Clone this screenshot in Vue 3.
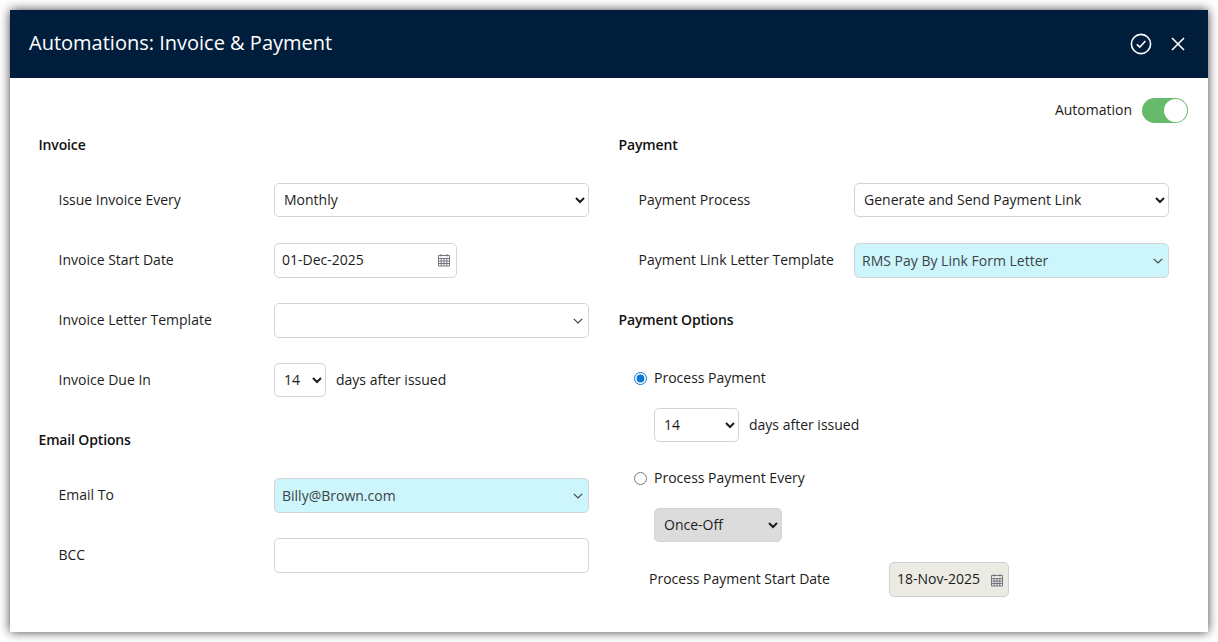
<script setup>
import { ref } from "vue"

const automation = ref(true)
const processMode = ref("days")
</script>

<template>
  <div class="page">
    <div class="modal">
      <header class="modal-header">
        <h1>Automations: Invoice &amp; Payment</h1>
        <div class="header-actions">
          <svg class="icon-check" viewBox="0 0 22 22" width="22" height="22">
            <circle cx="11" cy="11" r="9.6" />
            <path d="M6.8 11.4 9.8 14.2 15.4 8" />
          </svg>
          <svg class="icon-close" viewBox="0 0 16 16" width="16" height="16">
            <path d="M2 2 14 14M14 2 2 14" />
          </svg>
        </div>
      </header>

      <div class="modal-body">
        <div class="toggle-row">
          <span>Automation</span>
          <button class="toggle" :class="{ on: automation }" @click="automation = !automation">
            <span class="knob"></span>
          </button>
        </div>

        <div class="columns">
          <section>
            <h2>Invoice</h2>
            <div class="form-row">
              <label>Issue Invoice Every</label>
              <select class="field wide"><option>Monthly</option></select>
            </div>
            <div class="form-row">
              <label>Invoice Start Date</label>
              <div class="date date-start">
                <input value="01-Dec-2025" />
                <svg class="cal" viewBox="0 0 14 14" width="14" height="14">
                  <path d="M1.5 2.5h11v10.5h-11zM1.5 5.5h11M1.5 8h11M1.5 10.5h11M4.2 5.5v7.5M7 5.5v7.5M9.8 5.5v7.5M4 1v2.5M10 1v2.5" />
                </svg>
              </div>
            </div>
            <div class="form-row">
              <label>Invoice Letter Template</label>
              <div class="combo">
                <span></span>
                <svg class="chev" viewBox="0 0 10 6" width="10" height="6"><path d="M.8.8 5 5 9.2.8" /></svg>
              </div>
            </div>
            <div class="form-row">
              <label>Invoice Due In</label>
              <select class="field due"><option>14</option></select>
              <span class="after">days after issued</span>
            </div>

            <h2 class="next">Email Options</h2>
            <div class="form-row">
              <label>Email To</label>
              <div class="combo filled">
                <span>Billy@Brown.com</span>
                <svg class="chev" viewBox="0 0 10 6" width="10" height="6"><path d="M.8.8 5 5 9.2.8" /></svg>
              </div>
            </div>
            <div class="form-row">
              <label>BCC</label>
              <input class="text-input" />
            </div>
          </section>

          <section>
            <h2>Payment</h2>
            <div class="form-row">
              <label>Payment Process</label>
              <select class="field wide"><option>Generate and Send Payment Link</option></select>
            </div>
            <div class="form-row">
              <label>Payment Link Letter Template</label>
              <div class="combo filled">
                <span>RMS Pay By Link Form Letter</span>
                <svg class="chev" viewBox="0 0 10 6" width="10" height="6"><path d="M.8.8 5 5 9.2.8" /></svg>
              </div>
            </div>

            <h2 class="next">Payment Options</h2>
            <div class="options">
              <label class="radio">
                <input type="radio" value="days" v-model="processMode" />
                <span>Process Payment</span>
              </label>
              <div class="option-field">
                <select class="field days"><option>14</option></select>
                <span class="after">days after issued</span>
              </div>
              <label class="radio">
                <input type="radio" value="every" v-model="processMode" />
                <span>Process Payment Every</span>
              </label>
              <div class="option-field once-field">
                <select class="field once" disabled><option>Once-Off</option></select>
              </div>
              <div class="start-row">
                <label>Process Payment Start Date</label>
                <div class="date date-disabled">
                  <input value="18-Nov-2025" disabled />
                  <svg class="cal" viewBox="0 0 14 14" width="14" height="14">
                    <path d="M1.5 2.5h11v10.5h-11zM1.5 5.5h11M1.5 8h11M1.5 10.5h11M4.2 5.5v7.5M7 5.5v7.5M9.8 5.5v7.5M4 1v2.5M10 1v2.5" />
                  </svg>
                </div>
              </div>
            </div>
          </section>
        </div>
      </div>
    </div>
  </div>
</template>

<style>
html, body {
  margin: 0;
  background: #fff;
}
</style>

<style scoped>
.page {
  height: 642px;
  padding: 10px;
  box-sizing: border-box;
  overflow: hidden;
}
.modal {
  width: 1198px;
  height: 622px;
  background: #fff;
  box-shadow: 0 0 10px rgba(0, 0, 0, 0.75);
  font-family: "Open Sans", sans-serif;
  font-size: 14px;
  color: #1c1c1c;
  overflow: hidden;
}
.modal-header {
  height: 68px;
  padding: 0 22px 0 19px;
  background: #001e3c;
  display: flex;
  align-items: center;
  justify-content: space-between;
}
h1 {
  margin: 0 0 4px;
  font-size: 20px;
  font-weight: 400;
  color: #fff;
}
.header-actions {
  display: flex;
  align-items: center;
  gap: 18px;
}
.icon-check circle,
.icon-check path,
.icon-close path {
  fill: none;
  stroke: #fff;
  stroke-width: 1.6;
}
.modal-body {
  padding: 20px 20px 0 28px;
}
.toggle-row {
  height: 25px;
  display: flex;
  justify-content: flex-end;
  align-items: center;
  gap: 10px;
}
.toggle-row > span {
  padding-bottom: 2px;
}
.toggle {
  width: 46px;
  height: 25px;
  padding: 0;
  border: 0;
  border-radius: 13px;
  background: #66bb6a;
  display: flex;
  align-items: center;
}
.toggle.on {
  justify-content: flex-end;
}
.knob {
  width: 23px;
  height: 23px;
  margin-right: 1px;
  border-radius: 50%;
  background: #fff;
}
.columns {
  margin-top: 12px;
  display: grid;
  grid-template-columns: 580px 1fr;
}
h2 {
  margin: 0 0 28px;
  padding-left: 0.5px;
  height: 20px;
  line-height: 20px;
  font-size: 14px;
  font-weight: 600;
  letter-spacing: -0.15px;
  color: #111;
}
h2.next {
  margin-top: 33px;
}
.form-row {
  display: flex;
  align-items: center;
  height: 34px;
  margin-bottom: 26px;
  padding-left: 20px;
}
.form-row > label {
  width: 216px;
  flex: none;
  padding: 0 0 2px 0.5px;
  box-sizing: border-box;
}
.field {
  height: 34px;
  padding: 0 4px 2px 5px;
  border: 1px solid #d4d4d4;
  border-radius: 5px;
  background-color: #fff;
  font: inherit;
  color: inherit;
  box-sizing: border-box;
}
.wide {
  width: 315px;
}
.due {
  width: 52px;
}
.days {
  width: 85px;
}
.once {
  width: 128px;
  background-color: #dcdcdc;
  opacity: 1;
  color: #1c1c1c;
}
.after {
  margin-left: 10px;
  padding-bottom: 2px;
}
.combo,
.text-input {
  width: 315px;
  height: 35px;
  flex: none;
  border: 1px solid #d4d4d4;
  border-radius: 5px;
  box-sizing: border-box;
  background: #fff;
}
.combo {
  padding: 0 5px 0 7px;
  display: flex;
  align-items: center;
  justify-content: space-between;
}
.combo.filled {
  background: #ccf6fb;
  color: #3d4347;
}
.chev {
  fill: none;
  stroke: #444;
  stroke-width: 1.2;
  position: relative;
  top: 1px;
}
.date {
  height: 35px;
  padding: 0 5px 0 7px;
  display: flex;
  align-items: center;
  border: 1px solid #d4d4d4;
  border-radius: 5px;
  box-sizing: border-box;
}
.date input {
  flex: 1;
  min-width: 0;
  padding: 0 0 2px;
  border: 0;
  outline: 0;
  background: transparent;
  font: inherit;
  color: inherit;
}
.date-start {
  width: 183px;
}
.date-disabled {
  width: 120px;
  padding-right: 4px;
  background: #ebeae3;
  border-color: #cfcfcf;
}
.cal {
  flex: none;
  fill: none;
  stroke: #6b6b78;
  stroke-width: 0.9;
}
.options {
  padding-top: 10px;
}
.radio {
  height: 20px;
  padding-left: 16px;
  display: flex;
  align-items: center;
  gap: 7px;
}
.radio span {
  padding-bottom: 2px;
}
.radio input {
  width: 13px;
  height: 13px;
  margin: 0;
  accent-color: #0f78d4;
}
.option-field {
  height: 34px;
  margin: 20px 0 26px;
  padding-left: 36px;
  display: flex;
  align-items: center;
}
.once-field {
  margin-bottom: 20px;
}
.start-row {
  height: 35px;
  padding-left: 31px;
  display: flex;
  align-items: center;
}
.start-row > label {
  width: 240px;
  flex: none;
  padding-bottom: 2px;
}
</style>
